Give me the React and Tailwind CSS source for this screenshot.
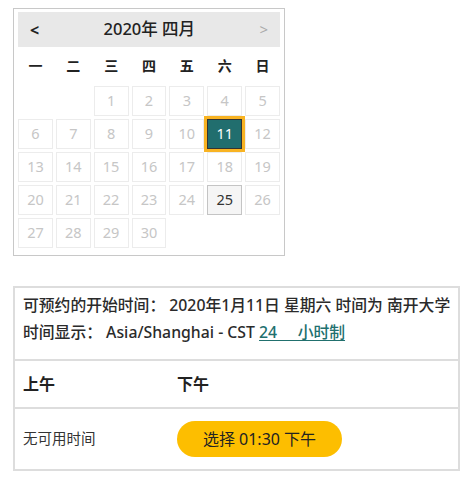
import React from 'react';

const weekdays = ['一', '二', '三', '四', '五', '六', '日'];
const blanks = [null, null];
const days = Array.from({ length: 30 }, (_, i) => i + 1);

function DayCell({ day }) {
  if (day === null) return <div />;
  if (day === 11) {
    return (
      <div className="flex h-[30px] items-center justify-center border border-[#333] bg-[#216e6e] text-white outline-3 outline-[#f8b322]">
        {day}
      </div>
    );
  }
  if (day === 25) {
    return (
      <div className="flex h-[30px] items-center justify-center border border-[#c4c4c4] bg-[#f5f5f5] text-[#333]">
        {day}
      </div>
    );
  }
  return (
    <div className="flex h-[30px] items-center justify-center border border-[#ececec] text-[#c6c6c6]">
      {day}
    </div>
  );
}

export default function App() {
  return (
    <div
      className="min-h-[485px] bg-white pl-[13px] pt-[8px] text-[#333]"
      style={{ fontFamily: '"Noto Sans", "Noto Sans CJK SC", sans-serif' }}
    >
      <div className="w-[272px] border border-[#c8c8c8] px-[4px] pt-[3px] pb-[7px]">
        <div className="flex h-[35px] items-center justify-between bg-[#e8e8e8] px-[12px]">
          <span className="text-[16px] font-bold text-[#222]">&lt;</span>
          <span className="text-[16.5px] font-medium text-[#222]">2020年 四月</span>
          <span className="text-[15px] text-[#aaa]">&gt;</span>
        </div>
        <div className="grid h-[36px] grid-cols-7 items-center gap-x-[3px] text-[14px] font-bold text-[#222]">
          {weekdays.map((w) => (
            <div key={w} className="text-center">{w}</div>
          ))}
        </div>
        <div className="mt-[3px] grid grid-cols-7 gap-[3px] text-[14.5px]">
          {[...blanks, ...days].map((d, i) => (
            <DayCell key={i} day={d} />
          ))}
        </div>
      </div>

      <div className="mt-[30px] w-[447px] border-2 border-[#dddddd]">
        <div className="px-[8px] pt-[4px] pb-[13px] text-[15.8px] leading-[27px] font-medium text-[#2b2b2b]">
          <div className="whitespace-nowrap">可预约的开始时间： 2020年1月11日 星期六 时间为 南开大学</div>
          <div>
            时间显示： Asia/Shanghai - CST{' '}
            <span className="text-[#21706e] underline underline-offset-2">24&nbsp;&nbsp;&nbsp;&nbsp;&nbsp;小时制</span>
          </div>
        </div>
        <div className="flex h-[48px] items-center border-t-2 border-[#dddddd] text-[16px] font-bold text-[#222]">
          <div className="w-[162px] pl-[8px]">上午</div>
          <div>下午</div>
        </div>
        <div className="flex h-[62px] items-center border-t-2 border-[#dddddd] text-[14.5px]">
          <div className="w-[162px] pl-[8px] text-[#333]">无可用时间</div>
          <button className="h-[36px] w-[165px] rounded-full bg-[#fdbe00] text-[16px] text-[#222]">
            选择 01:30 下午
          </button>
        </div>
      </div>
    </div>
  );
}
